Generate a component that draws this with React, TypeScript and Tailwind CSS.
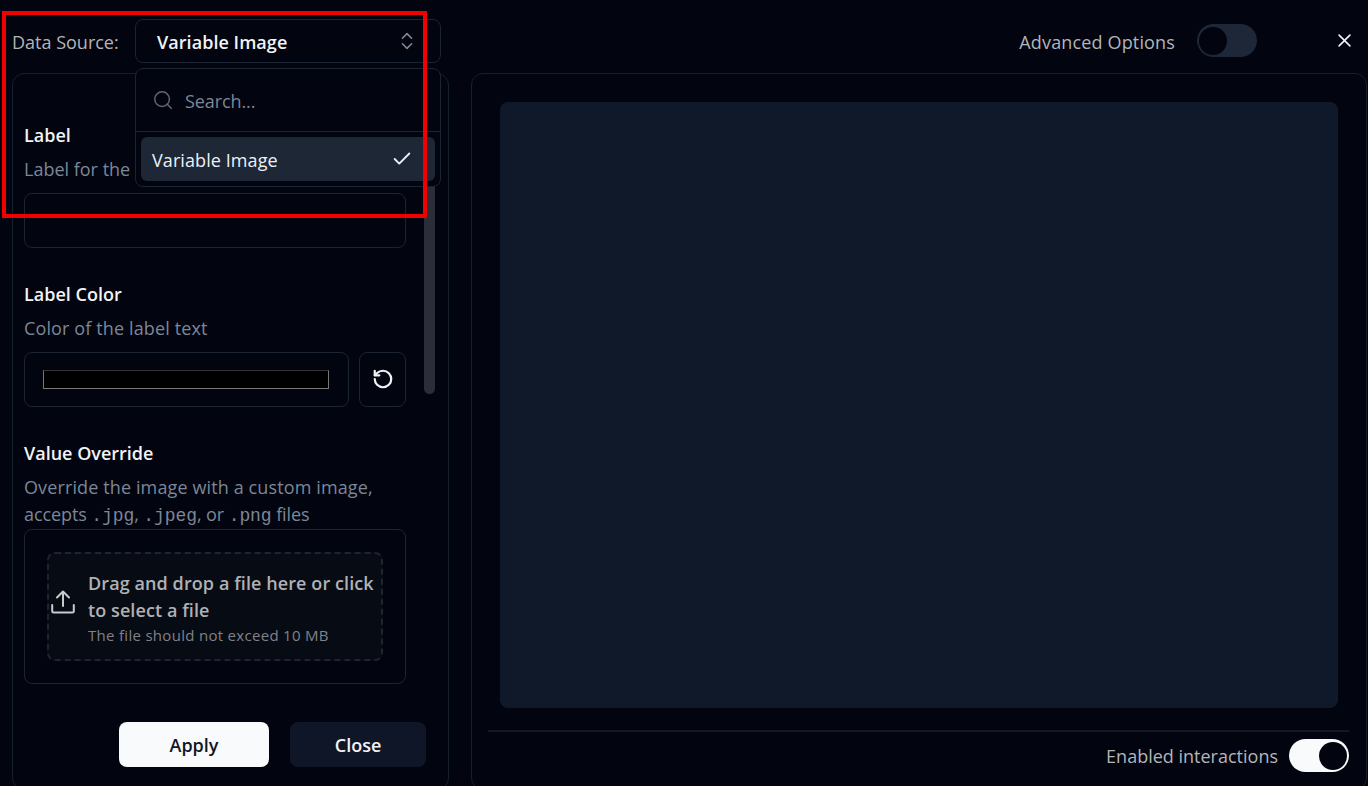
import { useState } from "react";
import { Check, ChevronsUpDown, RotateCcw, Search } from "lucide-react";
import { RxCross2 } from "react-icons/rx";

type ToggleProps = {
  checked: boolean;
  onChange: () => void;
  label: string;
};

const Toggle = ({ checked, onChange, label }: ToggleProps) => {
  return (
    <button
      role="switch"
      aria-checked={checked}
      aria-label={label}
      onClick={onChange}
      className={`flex h-[33px] w-[60px] shrink-0 items-center rounded-full p-[2px] ${
        checked ? "justify-end bg-[#f9fafc]" : "justify-start bg-[#1d2737]"
      }`}
    >
      <span className="size-[28px] rounded-full bg-[#02040f]" />
    </button>
  );
};

const UploadIcon = () => (
  <svg
    viewBox="0 0 24 24"
    fill="none"
    stroke="currentColor"
    strokeWidth={2}
    strokeLinecap="round"
    strokeLinejoin="round"
    className="size-[24px] shrink-0 text-[#c9cacd]"
  >
    <path d="M12 16V2" />
    <path d="M6 7.5 12 1.5l6 6" />
    <path d="M1.2 15v6.3a1.3 1.3 0 0 0 1.3 1.3h19a1.3 1.3 0 0 0 1.3-1.3V15" />
  </svg>
);

const FieldTitle = ({ text }: { text: string }) => (
  <h3 className="text-[18px] leading-[26px] font-semibold text-[#f1f3f6]">
    {text}
  </h3>
);

const DataSourceSelect = () => {
  return (
    <div className="relative">
      <button className="flex h-[44px] w-[306px] items-center justify-between rounded-lg border border-[#1a2432] pr-[22px] pl-[21px] text-[18px] font-semibold text-[#f1f3f6]">
        <span className="pt-[2px] tracking-[0.05px]">Variable Image</span>
        <ChevronsUpDown className="size-[22px] text-[#85888f]" strokeWidth={1.7} />
      </button>
      {/* dropdown */}
      <div className="absolute top-[49px] left-0 z-20 w-[306px] rounded-lg border border-[#1a2432] bg-[#02040f]">
        <div className="flex h-[63px] items-center gap-[11px] border-b border-[#1a2432] px-[16px]">
          <Search className="size-[22px] text-[#65686f]" strokeWidth={1.6} />
          <span className="pt-[3px] text-[18px] tracking-[-0.1px] text-[#7c8798]">
            Search...
          </span>
        </div>
        <div className="p-[5px]">
          <div className="flex h-[44px] items-center justify-between rounded-md bg-[#1e2736] pr-[22px] pl-[11px] text-[18px] text-[#eef0f4]">
            <span className="pt-[2px] tracking-[0.08px]">Variable Image</span>
            <Check className="size-[22px]" strokeWidth={2} />
          </div>
        </div>
      </div>
    </div>
  );
};

const SettingsPanel = () => {
  return (
    <section className="flex h-[717px] w-[437px] shrink-0 flex-col rounded-xl border border-[#16202d] pl-[11px]">
      <div className="flex h-[611px] justify-between pr-[13px]">
        <div className="w-[382px] pt-[48px]">
          <FieldTitle text="Label" />
          <p className="mt-[8px] text-[18px] leading-[27px] text-[#7c8798]">
            Label for the
          </p>
          <input
            aria-label="Label"
            className="mt-[10px] block h-[55px] w-full rounded-lg border border-[#1a2432] bg-transparent px-4 text-[#f1f3f6]"
          />

          <div className="mt-[33px]">
            <FieldTitle text="Label Color" />
            <p className="mt-[8px] text-[18px] leading-[27px] tracking-[0.13px] text-[#7c8798]">
              Color of the label text
            </p>
            <div className="mt-[10px] flex gap-[10px]">
              <div className="flex h-[55px] w-[325px] items-center rounded-lg border border-[#1a2432] pr-[19px] pl-[18px]">
                <div className="h-[19px] w-full border border-[#777777] border-t-[#333333] bg-black" />
              </div>
              <button
                aria-label="Reset color"
                className="flex h-[55px] w-[47px] items-center justify-center rounded-lg border border-[#1a2432] text-[#f1f3f6]"
              >
                <RotateCcw className="mb-px size-[22px]" strokeWidth={2.4} />
              </button>
            </div>
          </div>

          <div className="mt-[33px]">
            <FieldTitle text="Value Override" />
            <p className="mt-[8px] text-[18px] leading-[27px] tracking-[0.12px] whitespace-nowrap text-[#7c8798]">
              Override the image with a custom image,
            </p>
            <p className="h-[27px] text-[18px] leading-[27px] tracking-[-0.09px] whitespace-nowrap text-[#7c8798]">
              accepts <code className="font-['Liberation_Mono',monospace]">.jpg</code>,{" "}
              <code className="font-['Liberation_Mono',monospace]">.jpeg</code>, or{" "}
              <code className="font-['Liberation_Mono',monospace]">.png</code> files
            </p>
            <div className="mt-px h-[155px] rounded-lg border border-[#1a2432] p-[22px]">
              <div className="flex h-[109px] items-center gap-[13px] rounded-lg border-2 border-dashed border-[#1f242d] bg-[#070b14] pl-[2px]">
                <div className="pb-[10px]">
                  <UploadIcon />
                </div>
                <div className="pt-[3px] whitespace-nowrap">
                  <p className="text-[18px] leading-[27px] font-semibold tracking-[0.09px] text-[#b0b1b4]">
                    Drag and drop a file here or click
                    <br />
                    to select a file
                  </p>
                  <p className="text-[15px] leading-[23px] tracking-[0.3px] text-[#808287]">
                    The file should not exceed 10 MB
                  </p>
                </div>
              </div>
            </div>
          </div>
        </div>
        {/* scrollbar */}
        <div className="mt-[27px] h-[293px] w-[11px] rounded-full bg-[#2b2d37]" />
      </div>
      <div className="mt-[37px] flex gap-[21px] pl-[95px] text-[18px] font-semibold">
        <button className="h-[45px] w-[150px] rounded-lg bg-[#f9fafc] pt-px text-[#0f1625]">
          Apply
        </button>
        <button className="h-[45px] w-[136px] rounded-lg bg-[#0f1627] pt-px text-[#f1f3f6]">
          Close
        </button>
      </div>
    </section>
  );
};

const App = () => {
  const [advanced, setAdvanced] = useState(false);
  const [interactions, setInteractions] = useState(true);

  return (
    <div className="relative h-[786px] w-[1368px] overflow-hidden bg-[#02040f] font-['Open_Sans','Noto_Sans',sans-serif]">
      <header className="flex h-[73px] items-start justify-between pl-[12px]">
        <div className="flex items-center gap-[16px] pt-[19px]">
          <span className="w-[107px] pt-[2px] text-[18px] whitespace-nowrap text-[#b3b5b9]">
            Data Source:
          </span>
          <DataSourceSelect />
        </div>
        <div className="flex items-center pt-[24px] pr-[13px]">
          <span className="mr-[22px] pt-[3px] text-[18px] leading-[30px] tracking-[0.15px] text-[#b3b5b9]">
            Advanced Options
          </span>
          <Toggle
            label="Advanced Options"
            checked={advanced}
            onChange={() => setAdvanced(!advanced)}
          />
          <button aria-label="Close dialog" className="ml-[77px] text-[#f1f3f6]">
            <RxCross2 className="size-[21px]" />
          </button>
        </div>
      </header>

      <main className="flex gap-[22px] pl-[12px]">
        <SettingsPanel />
        <section className="h-[717px] w-[896px] shrink-0 rounded-xl border border-[#16202d] px-[17px] pt-[28px]">
          <div className="mx-[11px] h-[606px] rounded-lg bg-[#10192a]" />
          <div className="mt-[22px] -ml-px flex items-center justify-end gap-[11px] border-t-2 border-[#101925] pt-[7px]">
            <span className="pt-[2px] text-[18px] text-[#b3b5b9]">
              Enabled interactions
            </span>
            <Toggle
              label="Enabled interactions"
              checked={interactions}
              onChange={() => setInteractions(!interactions)}
            />
          </div>
        </section>
      </main>

      {/* highlight frame */}
      <div className="pointer-events-none absolute top-[11px] left-[2px] z-30 h-[207px] w-[425px] border-4 border-[#f00000]" />
    </div>
  );
};

export default App;
